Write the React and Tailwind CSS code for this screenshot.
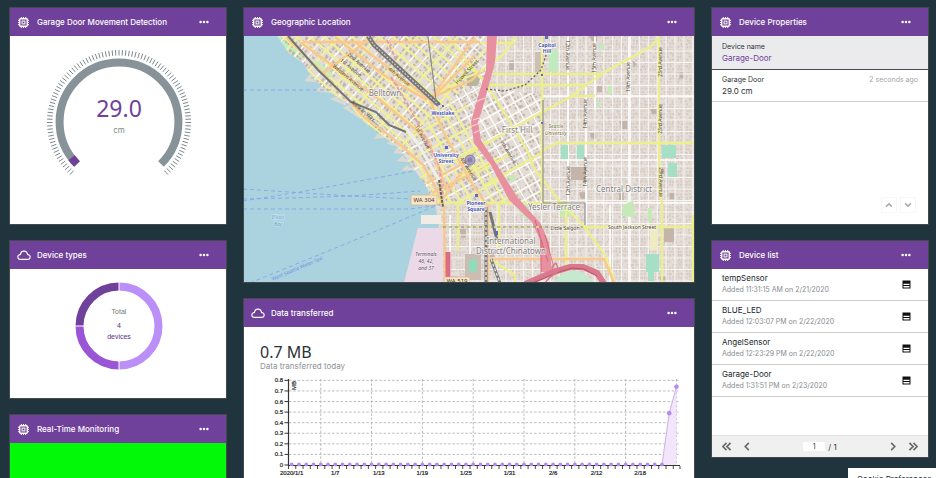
import React from "react";

function ChipIcon() {
  return (
    <svg viewBox="0 0 20 20" className="h-[11px] w-[11px]" fill="none" aria-hidden="true">
      <path d="M6 0v20M10 0v20M14 0v20M0 6h20M0 10h20M0 14h20" stroke="#fff" strokeWidth="1.8" />
      <rect x="3.2" y="3.2" width="13.6" height="13.6" rx="1.5" fill="#70419a" stroke="#fff" strokeWidth="2.4" />
      <rect x="7.4" y="7.4" width="5.2" height="5.2" stroke="#fff" strokeWidth="1.8" />
    </svg>
  );
}

function CloudIcon() {
  return (
    <svg viewBox="0 0 32 32" className="h-[14px] w-[14px]" fill="none" stroke="#fff" strokeWidth="2.6" aria-hidden="true">
      <path d="M16,7a7.66,7.66,0,0,1,1.51.15,8,8,0,0,1,6.35,6.34l.26,1.35,1.35.24a5.5,5.5,0,0,1-1,10.92H7.5a5.5,5.5,0,0,1-1-10.92l1.34-.24.26-1.35A8,8,0,0,1,16,7z" />
    </svg>
  );
}

function Card({ title, icon = "chip", children }) {
  return (
    <section className="flex flex-col border border-[#45494b] bg-white">
      <header className="flex h-7 items-center gap-[6px] bg-[#70419a] pr-[17px] pl-[6px] text-white">
        <span className="flex w-[15px] justify-center">{icon === "chip" ? <ChipIcon /> : <CloudIcon />}</span>
        <h2 className="flex-1 text-[8px] leading-3 font-medium whitespace-nowrap">{title}</h2>
        <button type="button" aria-label={`${title} options`} className="flex">
          <svg viewBox="0 0 10 4" className="h-1 w-[10px]" fill="#fff" aria-hidden="true">
            <circle cx="1.6" cy="2" r="1.25" />
            <circle cx="5" cy="2" r="1.25" />
            <circle cx="8.4" cy="2" r="1.25" />
          </svg>
        </button>
      </header>
      {children}
    </section>
  );
}

function polar(r, deg) {
  const a = (deg * Math.PI) / 180;
  return [r * Math.cos(a), r * Math.sin(a)];
}

function arc(r, from, to) {
  const [x1, y1] = polar(r, from);
  const [x2, y2] = polar(r, to);
  return `M${x1} ${y1}A${r} ${r} 0 ${to - from > 180 ? 1 : 0} 1 ${x2} ${y2}`;
}

function Gauge() {
  let ticks = "";
  for (let i = 0; i <= 100; i++) {
    const a = 133 + i * 2.74;
    const [x1, y1] = polar(66.5, a);
    const [x2, y2] = polar(72, a);
    ticks += `M${x1} ${y1}L${x2} ${y2}`;
  }
  return (
    <div className="grid h-[188px] place-items-center pb-4 pl-0.5">
      <div className="grid place-items-center">
        <svg viewBox="-73 -73 146 146" className="col-start-1 row-start-1 h-[146px] w-[146px]" fill="none" aria-hidden="true">
          <path d={ticks} stroke="#7d878c" strokeWidth="1" />
          <path d={arc(59.4, 135, 405)} stroke="#879398" strokeWidth="8" />
          <path d={arc(59.4, 135, 143)} stroke="#70419a" strokeWidth="8" />
        </svg>
        <div className="col-start-1 row-start-1 pb-3 text-center">
          <p className="font-['Noto_Sans',sans-serif] text-[23px] leading-7 text-[#70419a]">29.0</p>
          <p className="text-[8px] leading-4 text-[#7d878c]">cm</p>
        </div>
      </div>
    </div>
  );
}

function Donut() {
  return (
    <div className="grid h-[129px] place-items-center pb-4 pl-0.5">
      <div className="grid place-items-center">
        <svg viewBox="-44 -44 88 88" className="col-start-1 row-start-1 h-[88px] w-[88px]" fill="none" strokeWidth="8" aria-hidden="true">
          <path d={arc(39.5, -90, 90)} stroke="#ba8ff7" />
          <path d={arc(39.5, 90, 180)} stroke="#9a55d6" />
          <path d={arc(39.5, 180, 270)} stroke="#70419a" />
          <path d="M0 -44V-35M0 35V44M-44 0H-35" stroke="#fff" strokeWidth="1" />
        </svg>
        <div className="col-start-1 row-start-1 pb-1 text-center font-['Liberation_Sans',sans-serif] text-[7px] leading-[11px] text-[#5b2d86]">
          <p className="pb-[3px] text-[#6f787d]">Total</p>
          <p>4</p>
          <p>devices</p>
        </div>
      </div>
    </div>
  );
}

/* Small seeded generator so that the building footprints stay the same on each draw. */
function makeRandom(seed) {
  let s = seed;
  return () => {
    s = (s * 16807) % 2147483647;
    return s / 2147483647;
  };
}

function gridPath(step, x0, x1, y0, y1, vertical) {
  let d = "";
  if (vertical) for (let x = x0; x <= x1; x += step) d += `M${x} ${y0}V${y1}`;
  else for (let y = y0; y <= y1; y += step) d += `M${x0} ${y}H${x1}`;
  return d;
}

function buildings(seed, x0, x1, y0, y1, sx, sy, density) {
  const rnd = makeRandom(seed);
  let d = "";
  for (let x = x0; x < x1; x += sx)
    for (let y = y0; y < y1; y += sy)
      if (rnd() < density) d += `M${x + rnd()} ${y + rnd()}h${sx * (0.4 + rnd() * 0.4)}v${sy * (0.4 + rnd() * 0.4)}h${-sx * 0.5}z`;
  return d;
}

const YELLOW = [
  "M493 74H603", "M487 85H585", "M660 37L650 47L603 73L570 97L533 117L475 150L455 163",
  "M659 37V145L660 192L662 202V283", "M541 151L557 143H695", "M570 96H595",
  "M515 37L503 55L480 72L460 80L440 92", "M480 43H515", "M448 37L487 85L527 150L535 170L560 202L583 225L605 255L615 283",
  "M436 203H567", "M583 227H695", "M566 208V283", "M458 203V250", "M693 215V283", "M485 185L543 152",
  "M542 37V200", "M478 172L510 154", "M458 177L480 163", "M490 259L515 275V283", "M499 205V250",
];

const ORANGE = [
  "M286 37L306 57L323 73L336 88L351 103L364 117L386 133L403 147L423 165L436 188L444 208L445 283",
  "M303 42H480", "M300 42L380 100L428 140L447 190", "M355 42L430 100L445 135L473 185L487 205",
  "M372 37L323 73", "M475 37L430 100", "M475 55L433 97L472 80L480 72", "M335 37L385 76L427 100",
  "M427 183L470 160", "M432 193L475 172", "M440 203L462 172", "M488 205V283", "M490 259H604L614 283",
];

const LABELS = [
  [385, 96, "Belltown", "place"], [517, 133, "First Hill", "place"], [624, 192, "Central District", "place"],
  [554, 210, "Yesler Terrace", "place"], [511, 244, "International", "place"], [511, 254, "District/Chinatown", "place"],
  [547, 47, "Capitol", "stop"], [547, 53, "Hill", "stop"], [443, 115, "Westlake", "stop"],
  [446, 157, "University", "stop"], [446, 163, "Street", "stop"], [476, 205, "Pioneer", "stop"], [476, 211, "Square", "stop"],
  [556, 128, "Seattle", "campus"], [556, 135, "University", "campus"],
  [426, 256, "Terminals", "area"], [426, 263, "46, 42,", "area"], [426, 270, "and 37", "area"],
  [278, 219, "Elliott", "water"], [278, 226, "Bay", "water"],
  [565, 230, "Little Saigon", "road"], [632, 229, "South Jackson Street", "road"],
];

const LABEL_STYLE = {
  place: "fill-[#85817f] stroke-white/70 text-[8px]",
  stop: "fill-[#4a58b5] stroke-white/80 text-[5px] font-bold",
  campus: "fill-[#77783c] stroke-white/60 text-[5px] italic",
  area: "fill-[#65586a] stroke-white/30 text-[5px] italic",
  water: "fill-[#6e9fce] stroke-white/30 text-[5px] italic",
  road: "fill-[#4c4733] stroke-white/60 text-[5px]",
};

const ROADS = [
  [358, 64, 40, "2nd Avenue"], [350, 69, 40, "1st Avenue"], [347, 79, 40, "Western Avenue"], [398, 78, 40, "4th Avenue"],
  [362, 112, 38, "Alaskan Way"], [421, 138, 60, "1st Avenue"], [467, 170, 58, "4th Avenue"], [468, 73, -47, "Howell Street"],
  [507, 153, 58, "9th Avenue"], [566, 55, 90, "12th Avenue"], [596, 58, -90, "15th Avenue"], [587, 114, -90, "14th Avenue"],
  [630, 77, -90, "19th Avenue"], [662, 62, -90, "23rd Avenue"], [662, 119, -90, "23rd Avenue"], [570, 181, -90, "12th Avenue"],
  [587, 172, -90, "14th Avenue"], [659, 182, 90, "23rd Avenue"],
];

const CITY = "M277 36H696V283H404L418 228H439L436 208L426 186L416 172L399 148L393 143L379 133L364 122L349 104L323 88L311 75L303 63L289 53z";

function CityMap() {
  return (
    <svg
      viewBox="244 36 450 246"
      preserveAspectRatio="xMidYMid slice"
      className="h-[246px] w-full font-['Noto_Sans',sans-serif]"
      role="img"
      aria-label="Map of Seattle"
      fill="none"
    >
      <defs>
        <clipPath id="city"><path d={CITY} /></clipPath>
        <clipPath id="belltown"><path d="M270 36H493L487 66L445 106L412 135L400 150L240 36z" /></clipPath>
        <clipPath id="downtown"><path d="M400 150L412 135L445 106L487 66L492 88L543 95V203H436z" /></clipPath>
        <clipPath id="east"><path d="M493 36H696V283H439V203H543V95L492 88L487 66z" /></clipPath>
      </defs>
      <rect x="243" y="36" width="453" height="248" fill="#aad3df" />
      <path d={CITY} fill="#e4dcd6" />
      <path d="M311 75L307 80L320 81M323 87L318 90L334 92M338 98L334 99L346 104M350 106L346 108L374 126L370 121M364 112L378 129M379 134L377 137L392 136M394 140L390 143L402 146M399 148L396 152L411 153M404 157L400 160L414 161M408 166L405 169L419 169" stroke="#dcd8d2" strokeWidth="3" />
      <path d="M364 119L369 117L384 130L378 133z" fill="#69a8d8" />
      <path d="M277 36H290L303 57L298 60L287 50z" fill="#c3efc0" />

      <g clipPath="url(#city)">
        <g clipPath="url(#belltown)">
          <g transform="rotate(41 380 80)">
            <path d={buildings(11, 250, 520, -60, 220, 4.5, 5, 0.8)} fill="#c3b7ab" />
            <path d={gridPath(10, 250, 520, -60, 220, true)} stroke="#fbfaf6" strokeWidth="1.6" />
            <path d={gridPath(9, 250, 520, -60, 220, false)} stroke="#f5f3ee" strokeWidth="1.2" />
            <path d={gridPath(9, 250, 520, 12, 140, false)} stroke="#eff292" strokeWidth="2" />
            <path d={gridPath(30, 260, 520, -60, 220, true)} stroke="#eff292" strokeWidth="1.8" />
          </g>
        </g>
        <g clipPath="url(#downtown)">
          <g transform="rotate(-29 470 150)">
            <path d={buildings(23, 380, 580, 40, 270, 4, 4.5, 0.8)} fill="#c4b8ad" />
            <path d={gridPath(9.5, 380, 580, 40, 270, true)} stroke="#fbfaf6" strokeWidth="1.5" />
            <path d={gridPath(10, 380, 580, 40, 270, false)} stroke="#fbfaf6" strokeWidth="1.6" />
            <path d={gridPath(9.5, 408.5, 480, 40, 270, true)} stroke="#eff292" strokeWidth="2" />
            <path d={gridPath(20, 380, 490, 50, 270, false)} stroke="#eff292" strokeWidth="2" />
          </g>
        </g>
        <g clipPath="url(#east)">
          <path d={buildings(37, 439, 696, 36, 283, 2.8, 3.2, 0.8)} fill="#d3c8c0" />
          <path d={buildings(51, 439, 696, 36, 283, 10, 12, 0.08)} fill="#c2b3a9" />
          <path d={gridPath(8.9, 497, 696, 36, 283, true)} stroke="#f7f5f3" strokeWidth="1.1" />
          <path d={gridPath(11.5, 439, 696, 51, 283, false)} stroke="#f7f5f3" strokeWidth="1" />
          <path d="M568 37V200M586 85V225M595 37V110M629 37V283M490 96H696M543 160H696M558 203H696M450 215V283M470 205V283M610 205V283" stroke="#fff" strokeWidth="1.6" />
        </g>

        <path d="M549 50H558V72H549zM600 44h4v6h-4zM597 102h3v5h-3z" fill="#c2eabf" />
        <path d="M535 52h7v20h-7z" fill="#cdbfb2" />
        <path d="M608 86h4v8h-4zM624 205l9-5 2 18-14-3zM648 208h4v14h-4zM518 210l7-6 8 12-8 2zM560 205h12v12h-12zM508 176l5-2 3 6-5 3z" fill="#c6e9b8" />
        <path d="M561 145h7v14h-7zM577 145h7v14h-7zM662 145h14v13h-14zM668 163h9v14h-9zM646 254h13v18h-13zM648 272h6v9h-6z" fill="#a5dfc6" />
        <path d="M571 167h15v13h-15zM632 60l5 4-3 4zM597 86h5v6h-5zM664 228h10v14h-10z" fill="#c5b4a9" />
        <path d="M650 228h8v22h-8z" fill="#f1ebc4" />
        <path d="M465 254h16v26h-16z" fill="#cbbdb4" />
        <rect x="469" y="259" width="8" height="13" rx="3" fill="#8fdcbb" />
        <path d="M467 75l7-3 6 7-3 7h-10z" fill="#b7b59d" />
        <path d="M326 80L318 70L312 60L320 62L334 75z" fill="#cfeab9" />

        {YELLOW.map((d) => <path key={d} d={d} stroke="#edef8c" strokeWidth="2.3" />)}
        {ORANGE.map((d) => <path key={d} d={d} stroke="#f8c88d" strokeWidth="2.4" />)}
        <path d="M391 77L407 103L424 135L439 165L443 195M387 40L397 62" stroke="#e79aa7" strokeWidth="1.8" strokeDasharray="4 2" />
        <path d="M406 128L420 147L439 180" stroke="#eee" strokeWidth="3" />

        <path d="M487 36H497L495 62L487 92L482 110L478 122L481 140L497 165L518 198L541 224L549 243L552 272H541L540 240L532 222L509 200L491 165L474 143L471 122L477 100L486 70z" fill="#e8909f" />
        <path d="M545 235L556 275M541 240V275M535 220L548 262" stroke="#c8586e" strokeWidth="0.7" />
        <path d="M473 120l6-2M472 126l8-3M474 133l8-4M475 102l10-4" stroke="#f7d5db" strokeWidth="1.2" />
        <path d="M525 284L553 272L570 267L583 267L597 273L605 285" stroke="#d9798c" strokeWidth="6" />
        <path d="M528 285L556 273L572 268L584 269L597 276" stroke="#a9465c" strokeWidth="0.7" />
        <path d="M553 284Q565 265 583 273L597 284z" fill="#c5e8cf" />
        <path d="M545 283C553 270 562 277 556 263M556 263C548 268 553 274 566 267" stroke="#d9798c" strokeWidth="1.5" />
        <path d="M448 252V284" stroke="#dc6b86" strokeWidth="5" />

        <path d="M368 36L374 45L439 105" stroke="#77777a" strokeWidth="4.5" />
        <path d="M368 36L374 45L439 105" stroke="#c9c9c6" strokeWidth="1.3" strokeDasharray="2 1.5" />
        <path d="M288 36L318 70L351 102L376 112L389 125L406 132" stroke="#70767a" strokeWidth="2" />
        <path d="M486 207V283M490 212L497 240M491 259L500 283" stroke="#777" strokeWidth="3" />
        <path d="M486 207V283M491 259L500 283" stroke="#ddd" strokeWidth="1.4" strokeDasharray="3 2" />
        <path d="M439 180L443 207" stroke="#665" strokeWidth="2" strokeDasharray="3 1" />
        <path d="M428 37L436 100M543 100V203H585V225M440 227H583" stroke="#85878a" strokeWidth="1.1" />
        <path d="M486 89L505 91L525 85L541 70L546 55" stroke="#666" strokeWidth="1.3" strokeDasharray="2 2" />
        <path d="M440 227H583" stroke="#eaec8d" strokeWidth="1.5" strokeDasharray="3 3" />
      </g>

      <path d="M418 228H443V284H404z" fill="#ebd9e8" />
      <path d="M421 215H441V224H421z" fill="#f1ece4" />
      <g stroke="#829ee9" strokeWidth="0.8" strokeDasharray="4 3">
        <path d="M243 90H333" />
        <path d="M243 189L350 196L412 199M243 201L300 192L414 171M243 199L290 198L350 196L420 191M243 209H411L440 205M250 283L350 242L440 204" />
      </g>

      {ROADS.map(([x, y, angle, name], i) => (
        <text key={i} transform={`translate(${x} ${y}) rotate(${angle})`} textAnchor="middle" className="fill-[#51492f] text-[5px]">
          {name}
        </text>
      ))}
      {LABELS.map(([x, y, name, kind], i) => (
        <text key={i} x={x} y={y} textAnchor="middle" strokeWidth="1.5" paintOrder="stroke" className={LABEL_STYLE[kind]}>
          {name}
        </text>
      ))}
      <text transform="translate(298 270) rotate(-23)" textAnchor="middle" className="fill-[#728be0] text-[5px]">West Seattle Water Taxi</text>
      <rect x="411" y="195" width="26" height="10" rx="1" fill="#f7e3c8" stroke="#d5ad7d" strokeWidth="0.6" />
      <text x="424" y="202" textAnchor="middle" className="fill-[#4b3b2c] text-[6px]">WA 304</text>
      <rect x="444" y="277" width="26" height="10" rx="1" fill="#f7e3c8" stroke="#d5ad7d" strokeWidth="0.6" />
      <text x="457" y="283" textAnchor="middle" className="fill-[#4b3b2c] text-[6px]">WA 519</text>
      <path d="M545 36h3v3h-3zM438 103h2v2h-2zM442 105h2v2h-2zM445 146h3v3h-3zM475 194h3v3h-3zM495 231h3v4h-3zM541 74h2v2h-2zM541 122h2v2h-2z" fill="#5c6bc0" />
      <circle cx="470" cy="160" r="5" fill="#8d80b5" fillOpacity="0.65" stroke="#7672a3" strokeWidth="0.8" />
      <circle cx="470" cy="160" r="2.6" fill="#7d70ae" fillOpacity="0.7" />
    </svg>
  );
}

const DAYS = 54;
const STEP = 7.26;
const READINGS = Array.from({ length: DAYS }, (_, i) => (i === 53 ? 0.74 : i === 52 ? 0.49 : 0));
const DATES = ["2020/1/1", "1/7", "1/13", "1/19", "1/25", "1/31", "2/6", "2/12", "2/18"];

function TransferChart() {
  const px = (i) => 47.7 + i * STEP;
  const py = (v) => 93 - v * 105.8;
  const levels = [0, 1, 2, 3, 4, 5, 6, 7, 8];
  return (
    <svg viewBox="0 0 450 120" className="w-full font-['Liberation_Sans',sans-serif] text-[6px]" fill="none" role="img" aria-label="Data transferred per day in MB">
      {levels.slice(1).map((n) => (
        <path key={n} d={`M45 ${py(n / 10)}H435`} stroke="#b5b5b5" strokeWidth="0.9" strokeDasharray="2.5 1.8" />
      ))}
      {[4, 11, 18, 25, 32, 39, 46, 53].map((i) => (
        <path key={i} d={`M${px(i)} 7V93`} stroke="#b5b5b5" strokeWidth="0.9" strokeDasharray="2.5 1.8" />
      ))}
      <path d={`M${px(51)} 93L${px(52)} ${py(0.49)}L${px(53)} ${py(0.74)}V93z`} fill="#f2e5fc" />
      <path d={`M${px(51)} 93L${px(52)} ${py(0.49)}L${px(53)} ${py(0.74)}`} stroke="#cdb0e4" strokeWidth="1" />
      <path d="M44.5 7V93.5H436" stroke="#333" strokeWidth="1.2" />
      {READINGS.map((v, i) => <circle key={i} cx={px(i)} cy={py(v) - (v ? 0 : 0.6)} r={v ? 2.3 : 1.9} fill="#b58af2" />)}
      {levels.map((n) => (
        <g key={n}>
          <path d={`M40.5 ${py(n / 10)}H44.5`} stroke="#333" strokeWidth="1" />
          <text x="39" y={py(n / 10) + 2} textAnchor="end" fill="#222" stroke="#222" strokeWidth="0.2">{n ? `0.${n}` : "0"}</text>
        </g>
      ))}
      <path d={READINGS.map((_, i) => `M${44.5 + i * STEP} 94v3`).join("") + "M436 94v3"} stroke="#333" strokeWidth="0.9" />
      {DATES.map((d, i) => (
        <text key={d} x={px(i * 6)} y="102.5" textAnchor="middle" fill="#222" stroke="#222" strokeWidth="0.2">{d}</text>
      ))}
      <text transform="translate(51.5 18) rotate(-90)" fill="#222" stroke="#222" strokeWidth="0.2">MB</text>
    </svg>
  );
}

function Chevron({ d, className }) {
  return (
    <svg viewBox="0 0 10 10" className={className} fill="none" stroke="currentColor" strokeWidth="1.9" aria-hidden="true">
      <path d={d} />
    </svg>
  );
}

function PageButton({ label, d }) {
  return (
    <button type="button" aria-label={label} className="text-[#6b6b6b]">
      <Chevron d={d} className="h-[9px] w-[9px]" />
    </button>
  );
}

const DEVICES = [
  ["tempSensor", "Added 11:31:15 AM on 2/21/2020"],
  ["BLUE_LED", "Added 12:03:07 PM on 2/22/2020"],
  ["AngelSensor", "Added 12:23:29 PM on 2/22/2020"],
  ["Garage-Door", "Added 1:31:51 PM on 2/23/2020"],
];

function DeviceProperties() {
  return (
    <div className="flex h-[188px] flex-col text-[8px] leading-[11px] text-[#2b3236]">
      <div className="border-b border-[#45494b] bg-[#ebebed] px-[10px] pt-[5px] pb-[5px]">
        <p className="text-[7px]">Device name</p>
        <p className="pt-px text-[#70419a]">Garage-Door</p>
      </div>
      <div className="border-b border-[#cfcfcf] px-[10px] pt-[4px] pb-1">
        <div className="flex justify-between text-[7px]">
          <p>Garage Door</p>
          <p className="text-[#a2a6a8]">2 seconds ago</p>
        </div>
        <p className="pt-px">29.0 cm</p>
      </div>
      <div className="mt-auto flex justify-end gap-[3px] pr-3 pb-[11px] text-[#a6a6a6]">
        <button type="button" aria-label="Previous" className="grid h-4 w-4 place-items-center border border-[#f7f7f7]">
          <Chevron d="M1.5 7L5 3.5L8.5 7" className="h-2 w-2" />
        </button>
        <button type="button" aria-label="Next" className="grid h-4 w-4 place-items-center border border-[#f7f7f7]">
          <Chevron d="M1.5 3L5 6.5L8.5 3" className="h-2 w-2" />
        </button>
      </div>
    </div>
  );
}

function DeviceList() {
  return (
    <div className="flex h-[188px] flex-col">
      <ul>
        {DEVICES.map(([name, added]) => (
          <li key={name} className="flex h-8 items-center justify-between border-b border-[#cfcfcf] pr-[17px] pb-px pl-[10px]">
            <div className="leading-[11px]">
              <p className="text-[8px] text-[#20272b]">{name}</p>
              <p className="text-[7px] text-[#858b8f]">{added}</p>
            </div>
            <button type="button" aria-label={`Open ${name}`}>
              <svg viewBox="0 0 9 9" className="h-[9px] w-[9px]" aria-hidden="true">
                <path d="M0.5 0.5H8.5V8.5H0.5z" fill="#111" />
                <path d="M1.5 3.7H7.5V5H1.5zM1.5 6H7.5V7.6H1.5z" fill="#fff" />
              </svg>
            </button>
          </li>
        ))}
      </ul>
      <nav aria-label="Device pages" className="mt-auto flex h-[22px] items-center justify-between border-t border-[#e2e2e2] bg-[#f0f0f0] px-[10px]">
        <div className="flex gap-3">
          <PageButton label="First page" d="M5 1L1 5L5 9M9.5 1L5.5 5L9.5 9" />
          <PageButton label="Previous page" d="M6.5 1L2.5 5L6.5 9" />
        </div>
        <label className="flex items-center gap-[3px] text-[8px] text-[#333]">
          <input aria-label="Page" defaultValue="1" className="h-[9px] w-[22px] bg-white text-center text-[7px] leading-[9px]" />
          / 1
        </label>
        <div className="flex gap-3">
          <PageButton label="Next page" d="M3.5 1L7.5 5L3.5 9" />
          <PageButton label="Last page" d="M0.5 1L4.5 5L0.5 9M5 1L9 5L5 9" />
        </div>
      </nav>
    </div>
  );
}

export default function App() {
  return (
    <main className="h-screen overflow-hidden bg-[#20343d] font-['Inter',sans-serif]">
      <div className="grid grid-cols-4 items-start gap-x-4 pt-[7px] pr-[7px] pl-[9px]">
        <div className="flex flex-col gap-[15px]">
          <Card title="Garage Door Movement Detection"><Gauge /></Card>
          <Card title="Device types" icon="cloud"><Donut /></Card>
          <Card title="Real-Time Monitoring"><div className="h-[120px] bg-[#02f908]" /></Card>
        </div>
        <div className="col-span-2 flex flex-col gap-[15px]">
          <Card title="Geographic Location"><CityMap /></Card>
          <Card title="Data transferred" icon="cloud">
            <div className="px-4 pt-[15px]">
              <p className="font-['Noto_Sans',sans-serif] text-[16px] leading-5 text-[#2b3236]">0.7 MB</p>
              <p className="pb-0.5 text-[8px] leading-2 text-[#8d9194]">Data transferred today</p>
            </div>
            <TransferChart />
          </Card>
        </div>
        <div className="flex flex-col gap-[15px]">
          <Card title="Device Properties"><DeviceProperties /></Card>
          <Card title="Device list"><DeviceList /></Card>
        </div>
      </div>
      <button type="button" className="fixed right-0 -bottom-3 h-[22px] w-[88px] bg-white pl-[9px] text-left text-[8px] leading-[22px] whitespace-nowrap text-[#2b3236]">
        Cookie Preferences
      </button>
    </main>
  );
}
